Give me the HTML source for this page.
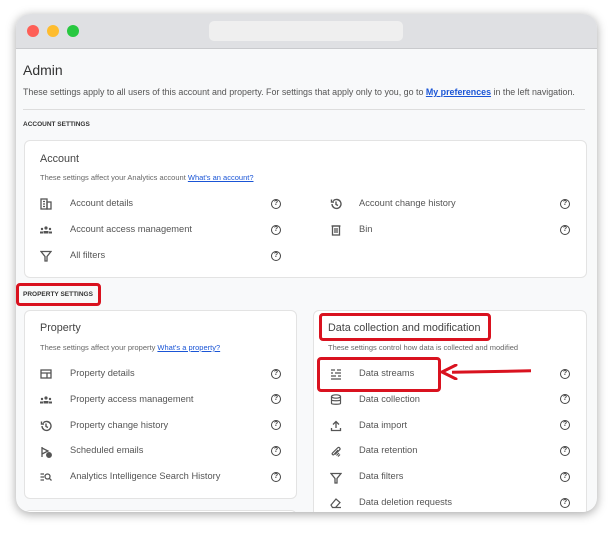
<!DOCTYPE html>
<html><head><meta charset="utf-8"><style>
*{margin:0;padding:0;box-sizing:border-box}
body{width:612px;height:526px;background:#fff;font-family:"Liberation Sans",sans-serif;position:relative;overflow:hidden}
.win{position:absolute;left:16px;top:14px;width:581px;height:498px;border-radius:14px;background:#f8f9fa;overflow:hidden;box-shadow:0 2px 10px rgba(0,0,0,.35)}
.clip{position:absolute;left:0;top:0;width:612px;height:526px;clip-path:inset(14px 15px 14px 16px round 14px)}
.tb{position:absolute;left:0;top:0;width:100%;height:35px;background:#dfe0e3;border-bottom:1px solid #c9cacd}
.dot{position:absolute;top:11px;width:12px;height:12px;border-radius:50%}
.url{position:absolute;left:193px;top:7px;width:194px;height:20px;border-radius:5px;background:#efefef}
.a{position:absolute;white-space:nowrap}
.card{position:absolute;background:#fff;border:1px solid #e3e3e3;border-radius:6px}
.t{font-size:10.8px;color:#444}
.lbl{font-size:9.3px;color:#555}
.s{font-size:7.5px;color:#666}
.lnk{color:#1a55d6;text-decoration:underline}
.red{position:absolute;border:3px solid #d9121f;border-radius:4px}
svg.i{position:absolute;width:12px;height:12px}
.q{position:absolute;width:10px;height:10px;border:1.3px solid #444;border-radius:50%;font-size:7px;font-weight:bold;color:#444;text-align:center;line-height:8px}
</style></head><body>
<div class="win">
<div class="tb"><div class="dot" style="left:11px;background:#fe5f57"></div><div class="dot" style="left:31px;background:#febc2e"></div><div class="dot" style="left:51px;background:#28c840"></div><div class="url"></div></div>
</div>
<div class="clip">
<div class="a" style="left:23px;top:62px;font-size:14px;color:#333">Admin</div>
<div class="a" style="left:23px;top:87px;font-size:8.9px;color:#555">These settings apply to all users of this account and property. For settings that apply only to you, go to <span class="lnk" style="font-weight:bold">My preferences</span> in the left navigation.</div>
<div class="a" style="left:23px;top:109px;width:562px;height:1px;background:#ddd"></div>
<div class="a" style="left:23px;top:121px;font-size:6.5px;color:#333;font-weight:bold">ACCOUNT SETTINGS</div>

<div class="card" style="left:24px;top:140px;width:563px;height:138px"></div>
<div class="a t" style="left:40px;top:153px">Account</div>
<div class="a s" style="left:40px;top:173px">These settings affect your Analytics account <span class="lnk">What's an account?</span></div>

<div class="card" style="left:24px;top:310px;width:273px;height:189px"></div>
<div class="card" style="left:24px;top:510px;width:273px;height:20px"></div>
<div class="card" style="left:313px;top:310px;width:274px;height:230px"></div>
<div class="a t" style="left:40px;top:322px">Property</div>
<div class="a s" style="left:40px;top:343px">These settings affect your property <span class="lnk">What's a property?</span></div>
<div class="a t" style="left:328px;top:322px">Data collection and modification</div>
<div class="a s" style="left:328px;top:343px">These settings control how data is collected and modified</div>

<div class="a" style="left:23px;top:291px;font-size:6.5px;color:#333;font-weight:bold">PROPERTY SETTINGS</div>

<div class="a lbl" style="left:70px;top:198px">Account details</div>
<div class="a lbl" style="left:70px;top:224px">Account access management</div>
<div class="a lbl" style="left:70px;top:250px">All filters</div>
<div class="a lbl" style="left:359px;top:198px">Account change history</div>
<div class="a lbl" style="left:359px;top:224px">Bin</div>

<div class="a lbl" style="left:70px;top:368px">Property details</div>
<div class="a lbl" style="left:70px;top:394px">Property access management</div>
<div class="a lbl" style="left:70px;top:420px">Property change history</div>
<div class="a lbl" style="left:70px;top:445px">Scheduled emails</div>
<div class="a lbl" style="left:70px;top:471px">Analytics Intelligence Search History</div>

<div class="a lbl" style="left:359px;top:368px">Data streams</div>
<div class="a lbl" style="left:359px;top:394px">Data collection</div>
<div class="a lbl" style="left:359px;top:420px">Data import</div>
<div class="a lbl" style="left:359px;top:445px">Data retention</div>
<div class="a lbl" style="left:359px;top:471px">Data filters</div>
<div class="a lbl" style="left:359px;top:497px">Data deletion requests</div>

<div class="q" style="left:271px;top:199px">?</div><div class="q" style="left:271px;top:225px">?</div><div class="q" style="left:271px;top:251px">?</div>
<div class="q" style="left:560px;top:199px">?</div><div class="q" style="left:560px;top:225px">?</div>
<div class="q" style="left:271px;top:369px">?</div><div class="q" style="left:271px;top:394px">?</div><div class="q" style="left:271px;top:420px">?</div><div class="q" style="left:271px;top:446px">?</div><div class="q" style="left:271px;top:472px">?</div>
<div class="q" style="left:560px;top:369px">?</div><div class="q" style="left:560px;top:394px">?</div><div class="q" style="left:560px;top:420px">?</div><div class="q" style="left:560px;top:446px">?</div><div class="q" style="left:560px;top:472px">?</div><div class="q" style="left:560px;top:498px">?</div>

<svg class="i" style="left:40px;top:198px" viewBox="0 0 12 12" fill="none" stroke="#555" stroke-width="1.3"><rect x="1" y="1" width="6" height="10"/><rect x="7" y="4" width="4" height="7"/><path d="M3 3.5H5M3 6H5M3 8.5H5"/></svg>
<svg class="i" style="left:40px;top:224px" viewBox="0 0 12 12" fill="#555"><circle cx="6" cy="4" r="1.6"/><circle cx="2" cy="5" r="1.2"/><circle cx="10" cy="5" r="1.2"/><rect x="3.5" y="7" width="5" height="2.5"/><rect x="0" y="7.5" width="3" height="2"/><rect x="9" y="7.5" width="3" height="2"/></svg>
<svg class="i" style="left:40px;top:250px" viewBox="0 0 12 12" fill="none" stroke="#555" stroke-width="1.3"><path d="M1 1.5H11L7 6.5V11H5V6.5Z"/></svg>
<svg class="i" style="left:330px;top:198px" viewBox="0 0 12 12" fill="none" stroke="#555" stroke-width="1.4"><path d="M2 6A4.5 4.5 0 1 0 3.3 2.8M1.5 1.5V4H4M6 3.5V6.5L8 7.5"/></svg>
<svg class="i" style="left:330px;top:224px" viewBox="0 0 12 12" fill="none" stroke="#555" stroke-width="1.3"><rect x="2.5" y="2" width="7" height="9"/><path d="M1.5 2H10.5M5 4V9M7 4V9"/></svg>

<svg class="i" style="left:40px;top:368px" viewBox="0 0 12 12" fill="none" stroke="#555" stroke-width="1.3"><rect x="1" y="2" width="10" height="8"/><path d="M1 5H11M7 5V10" /></svg>
<svg class="i" style="left:40px;top:394px" viewBox="0 0 12 12" fill="#555"><circle cx="6" cy="4" r="1.6"/><circle cx="2" cy="5" r="1.2"/><circle cx="10" cy="5" r="1.2"/><rect x="3.5" y="7" width="5" height="2.5"/><rect x="0" y="7.5" width="3" height="2"/><rect x="9" y="7.5" width="3" height="2"/></svg>
<svg class="i" style="left:40px;top:420px" viewBox="0 0 12 12" fill="none" stroke="#555" stroke-width="1.4"><path d="M2 6A4.5 4.5 0 1 0 3.3 2.8M1.5 1.5V4H4M6 3.5V6.5L8 7.5"/></svg>
<svg class="i" style="left:40px;top:446px" viewBox="0 0 12 12" fill="none" stroke="#555" stroke-width="1.3"><path d="M2 1V11M2 2L8 5L2 8"/><circle cx="9" cy="9" r="2.3" fill="#555"/></svg>
<svg class="i" style="left:40px;top:471px" viewBox="0 0 12 12" fill="none" stroke="#555" stroke-width="1.3"><path d="M0.5 3H4M0.5 6H4M0.5 9H4"/><circle cx="7.5" cy="5.5" r="2.5"/><path d="M9.3 7.3L11.5 9.5"/></svg>

<svg class="i" style="left:330px;top:368px" viewBox="0 0 12 12" fill="none" stroke="#555" stroke-width="1.2"><path d="M1 2H5M7 2H11M1 5H3M5 5H11M1 8H6M8 8H11M1 11H11"/></svg>
<svg class="i" style="left:330px;top:394px" viewBox="0 0 12 12" fill="none" stroke="#555" stroke-width="1.2"><ellipse cx="6" cy="2.5" rx="4.5" ry="1.7"/><path d="M1.5 2.5V9.5C1.5 10.5 10.5 10.5 10.5 9.5V2.5M1.5 6C1.5 7 10.5 7 10.5 6"/></svg>
<svg class="i" style="left:330px;top:420px" viewBox="0 0 12 12" fill="none" stroke="#555" stroke-width="1.3"><path d="M6 8V1.5M3 4.5L6 1.5L9 4.5M1.5 8V10.5H10.5V8"/></svg>
<svg class="i" style="left:330px;top:446px" viewBox="0 0 12 12" fill="none" stroke="#555" stroke-width="1.2"><path d="M8 4L4 8.5C3 9.5 1.5 8 2.5 7L7.5 2C9 0.5 11 2.5 9.5 4L5 8.5M9 7L6.5 9.5M10 8.5L8 10.5"/></svg>
<svg class="i" style="left:330px;top:472px" viewBox="0 0 12 12" fill="none" stroke="#555" stroke-width="1.3"><path d="M1 1.5H11L7 6.5V11H5V6.5Z"/></svg>
<svg class="i" style="left:330px;top:497px" viewBox="0 0 12 12" fill="none" stroke="#555" stroke-width="1.2"><path d="M1 8L6 2L10 5.5L5.5 10.5H2.5Z M5.5 10.5H11"/></svg>

<div class="red" style="left:16px;top:283px;width:85px;height:23px"></div>
<div class="red" style="left:319px;top:313px;width:172px;height:28px"></div>
<div class="red" style="left:317px;top:357px;width:124px;height:35px"></div>
<div class="a" style="left:452px;top:370px;width:79px;height:3px;background:#d9121f;transform:rotate(-1deg)"></div>
<svg style="position:absolute;left:441px;top:364px" width="18" height="16" viewBox="0 0 18 16"><path d="M1 8L15 1M1 8L15 15" stroke="#d9121f" stroke-width="3" fill="none" stroke-linecap="round"/></svg>
</div>
</body></html>
